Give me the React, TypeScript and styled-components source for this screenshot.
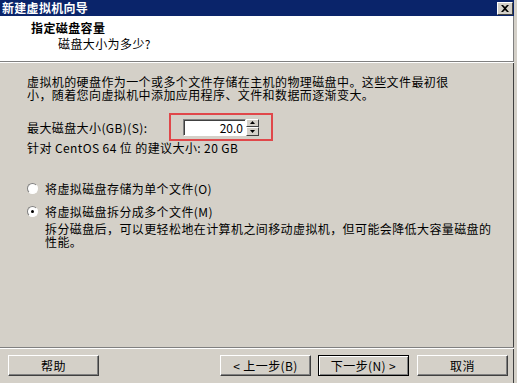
import styled, { createGlobalStyle } from 'styled-components';

const GlobalStyle = createGlobalStyle`
  html, body {
    margin: 0;
    padding: 0;
    background: #d4d0c8;
  }
  body {
    font-family: "Noto Sans CJK SC", "Liberation Sans", sans-serif;
    font-size: 12px;
    color: #000;
  }
`;

const Window = styled.div`
  width: 517px;
  height: 383px;
  box-sizing: border-box;
  display: flex;
  flex-direction: column;
  background: #d4d0c8;
  border-right: 3px solid #d4d0c8;
  box-shadow: inset -1px 0 0 #404040;
  overflow: hidden;
`;

const TitleBar = styled.div`
  height: 16px;
  flex: none;
  background: #0a246a;
  display: flex;
  align-items: center;
  justify-content: space-between;
  padding: 0 1px 0 2px;
`;

const TitleText = styled.span`
  color: #fff;
  font-weight: bold;
  font-size: 12px;
  line-height: 14px;
  letter-spacing: 0.3px;
`;

const CloseButton = styled.div`
  width: 16px;
  height: 13px;
  box-sizing: border-box;
  background: #d4d0c8;
  border-top: 1px solid #fff;
  border-left: 1px solid #fff;
  border-right: 1px solid #404040;
  border-bottom: 1px solid #404040;
  display: flex;
  align-items: center;
  justify-content: center;
`;

const Header = styled.div`
  height: 46px;
  flex: none;
  box-sizing: border-box;
  background: #fff;
  border-bottom: 1px solid #808080;
  border-right: 1px solid #808080;
  box-shadow: 0 1px 0 #fff;
  margin-bottom: 1px;
  padding: 5px 0 0 31px;
`;

const HeaderTitle = styled.div`
  font-weight: bold;
  line-height: 13px;
  letter-spacing: 0.4px;
`;

const HeaderSub = styled.div`
  line-height: 13px;
  margin: 3px 0 0 27px;
  letter-spacing: 0.4px;
`;

const Body = styled.div`
  flex: 1;
  padding: 12px 0 0 27px;
  display: flex;
  flex-direction: column;
  letter-spacing: 0.4px;
`;

const Para = styled.div<{ indent?: number; width?: number }>`
  line-height: 13px;
  margin-left: ${p => p.indent ?? 0}px;
  width: ${p => (p.width ? `${p.width}px` : 'auto')};
  white-space: ${p => (p.width ? 'normal' : 'nowrap')};
`;

const SpinRow = styled.div`
  display: flex;
  align-items: center;
  margin-top: 12px;
`;

const FieldLabel = styled.span`
  width: 142px;
  line-height: 13px;
`;

const Highlight = styled.div`
  border: 2px solid #e0474a;
  padding: 4px 12px;
  width: 104px;
  height: 28px;
  box-sizing: border-box;
  display: flex;
  align-items: center;
`;

const SpinInput = styled.div`
  width: 63px;
  height: 17px;
  box-sizing: border-box;
  background: #fff;
  border-top: 1px solid #808080;
  border-left: 1px solid #808080;
  border-right: 1px solid #fff;
  border-bottom: 1px solid #fff;
  box-shadow: inset 1px 1px 0 #404040;
  text-align: right;
  padding-right: 2px;
  line-height: 15px;
  letter-spacing: 0;
`;

const SpinButtons = styled.div`
  display: flex;
  flex-direction: column;
  width: 13px;
  height: 17px;
`;

const SpinArrow = styled.div`
  flex: 1;
  background: #d4d0c8;
  border-top: 1px solid #fff;
  border-left: 1px solid #fff;
  border-right: 1px solid #404040;
  border-bottom: 1px solid #404040;
  display: flex;
  align-items: center;
  justify-content: center;
`;

const RadioRow = styled.label<{ gap: number }>`
  display: flex;
  align-items: center;
  height: 16px;
  margin-top: ${p => p.gap}px;
  line-height: 13px;
`;

const RadioCircle = styled.span<{ checked?: boolean }>`
  width: 11px;
  height: 11px;
  border-radius: 50%;
  box-sizing: border-box;
  background: #fff;
  border: 1px solid;
  border-color: #808080 #fff #fff #808080;
  margin-right: 7px;
  display: flex;
  align-items: center;
  justify-content: center;
  &::after {
    content: '';
    width: 3px;
    height: 3px;
    border-radius: 50%;
    background: ${p => (p.checked ? '#000' : 'transparent')};
  }
`;

const Footer = styled.div`
  flex: none;
  border-top: 1px solid #808080;
  box-shadow: inset 0 1px 0 #fff;
  padding: 7px 6px 7px 8px;
  display: flex;
  align-items: center;
`;

const Button = styled.div<{ isDefault?: boolean }>`
  width: 91px;
  height: 21px;
  box-sizing: border-box;
  background: #d4d0c8;
  border: 1px solid;
  border-color: ${p => (p.isDefault ? '#000' : '#fff #404040 #404040 #fff')};
  box-shadow: ${p =>
    p.isDefault
      ? 'inset 1px 1px 0 #fff, inset -1px -1px 0 #808080'
      : 'inset -1px -1px 0 #808080'};
  display: flex;
  align-items: center;
  justify-content: center;
  line-height: 13px;
  letter-spacing: 0.4px;
`;

const Spacer = styled.div`
  flex: 1;
`;

const ButtonGap = styled.div<{ w: number }>`
  width: ${p => p.w}px;
`;

export default function App() {
  return (
    <>
      <GlobalStyle />
      <Window>
        <TitleBar>
          <TitleText>新建虚拟机向导</TitleText>
          <CloseButton>
            <svg width="8" height="7" viewBox="0 0 8 7">
              <path d="M0 0h2l2 2 2-2h2L5 3.5 8 7H6L4 5 2 7H0l3-3.5z" fill="#000" />
            </svg>
          </CloseButton>
        </TitleBar>
        <Header>
          <HeaderTitle>指定磁盘容量</HeaderTitle>
          <HeaderSub>磁盘大小为多少?</HeaderSub>
        </Header>
        <Body>
          <Para width={430}>
            虚拟机的硬盘作为一个或多个文件存储在主机的物理磁盘中。这些文件最初很小，随着您向虚拟机中添加应用程序、文件和数据而逐渐变大。
          </Para>
          <SpinRow>
            <FieldLabel>最大磁盘大小(GB)(S):</FieldLabel>
            <Highlight>
              <SpinInput>20.0</SpinInput>
              <SpinButtons>
                <SpinArrow>
                  <svg width="5" height="3" viewBox="0 0 5 3">
                    <path d="M2.5 0L5 3H0z" fill="#000" />
                  </svg>
                </SpinArrow>
                <SpinArrow>
                  <svg width="5" height="3" viewBox="0 0 5 3">
                    <path d="M0 0h5L2.5 3z" fill="#000" />
                  </svg>
                </SpinArrow>
              </SpinButtons>
            </Highlight>
          </SpinRow>
          <Para>针对 CentOS 64 位 的建议大小: 20 GB</Para>
          <RadioRow gap={26}>
            <RadioCircle />
            将虚拟磁盘存储为单个文件(O)
          </RadioRow>
          <RadioRow gap={7}>
            <RadioCircle checked />
            将虚拟磁盘拆分成多个文件(M)
          </RadioRow>
          <Para indent={18} width={452} style={{ marginTop: 3 }}>
            拆分磁盘后，可以更轻松地在计算机之间移动虚拟机，但可能会降低大容量磁盘的性能。
          </Para>
        </Body>
        <Footer>
          <Button>帮助</Button>
          <Spacer />
          <Button>&lt; 上一步(B)</Button>
          <ButtonGap w={7} />
          <Button isDefault>下一步(N) &gt;</Button>
          <ButtonGap w={8} />
          <Button>取消</Button>
        </Footer>
      </Window>
    </>
  );
}
